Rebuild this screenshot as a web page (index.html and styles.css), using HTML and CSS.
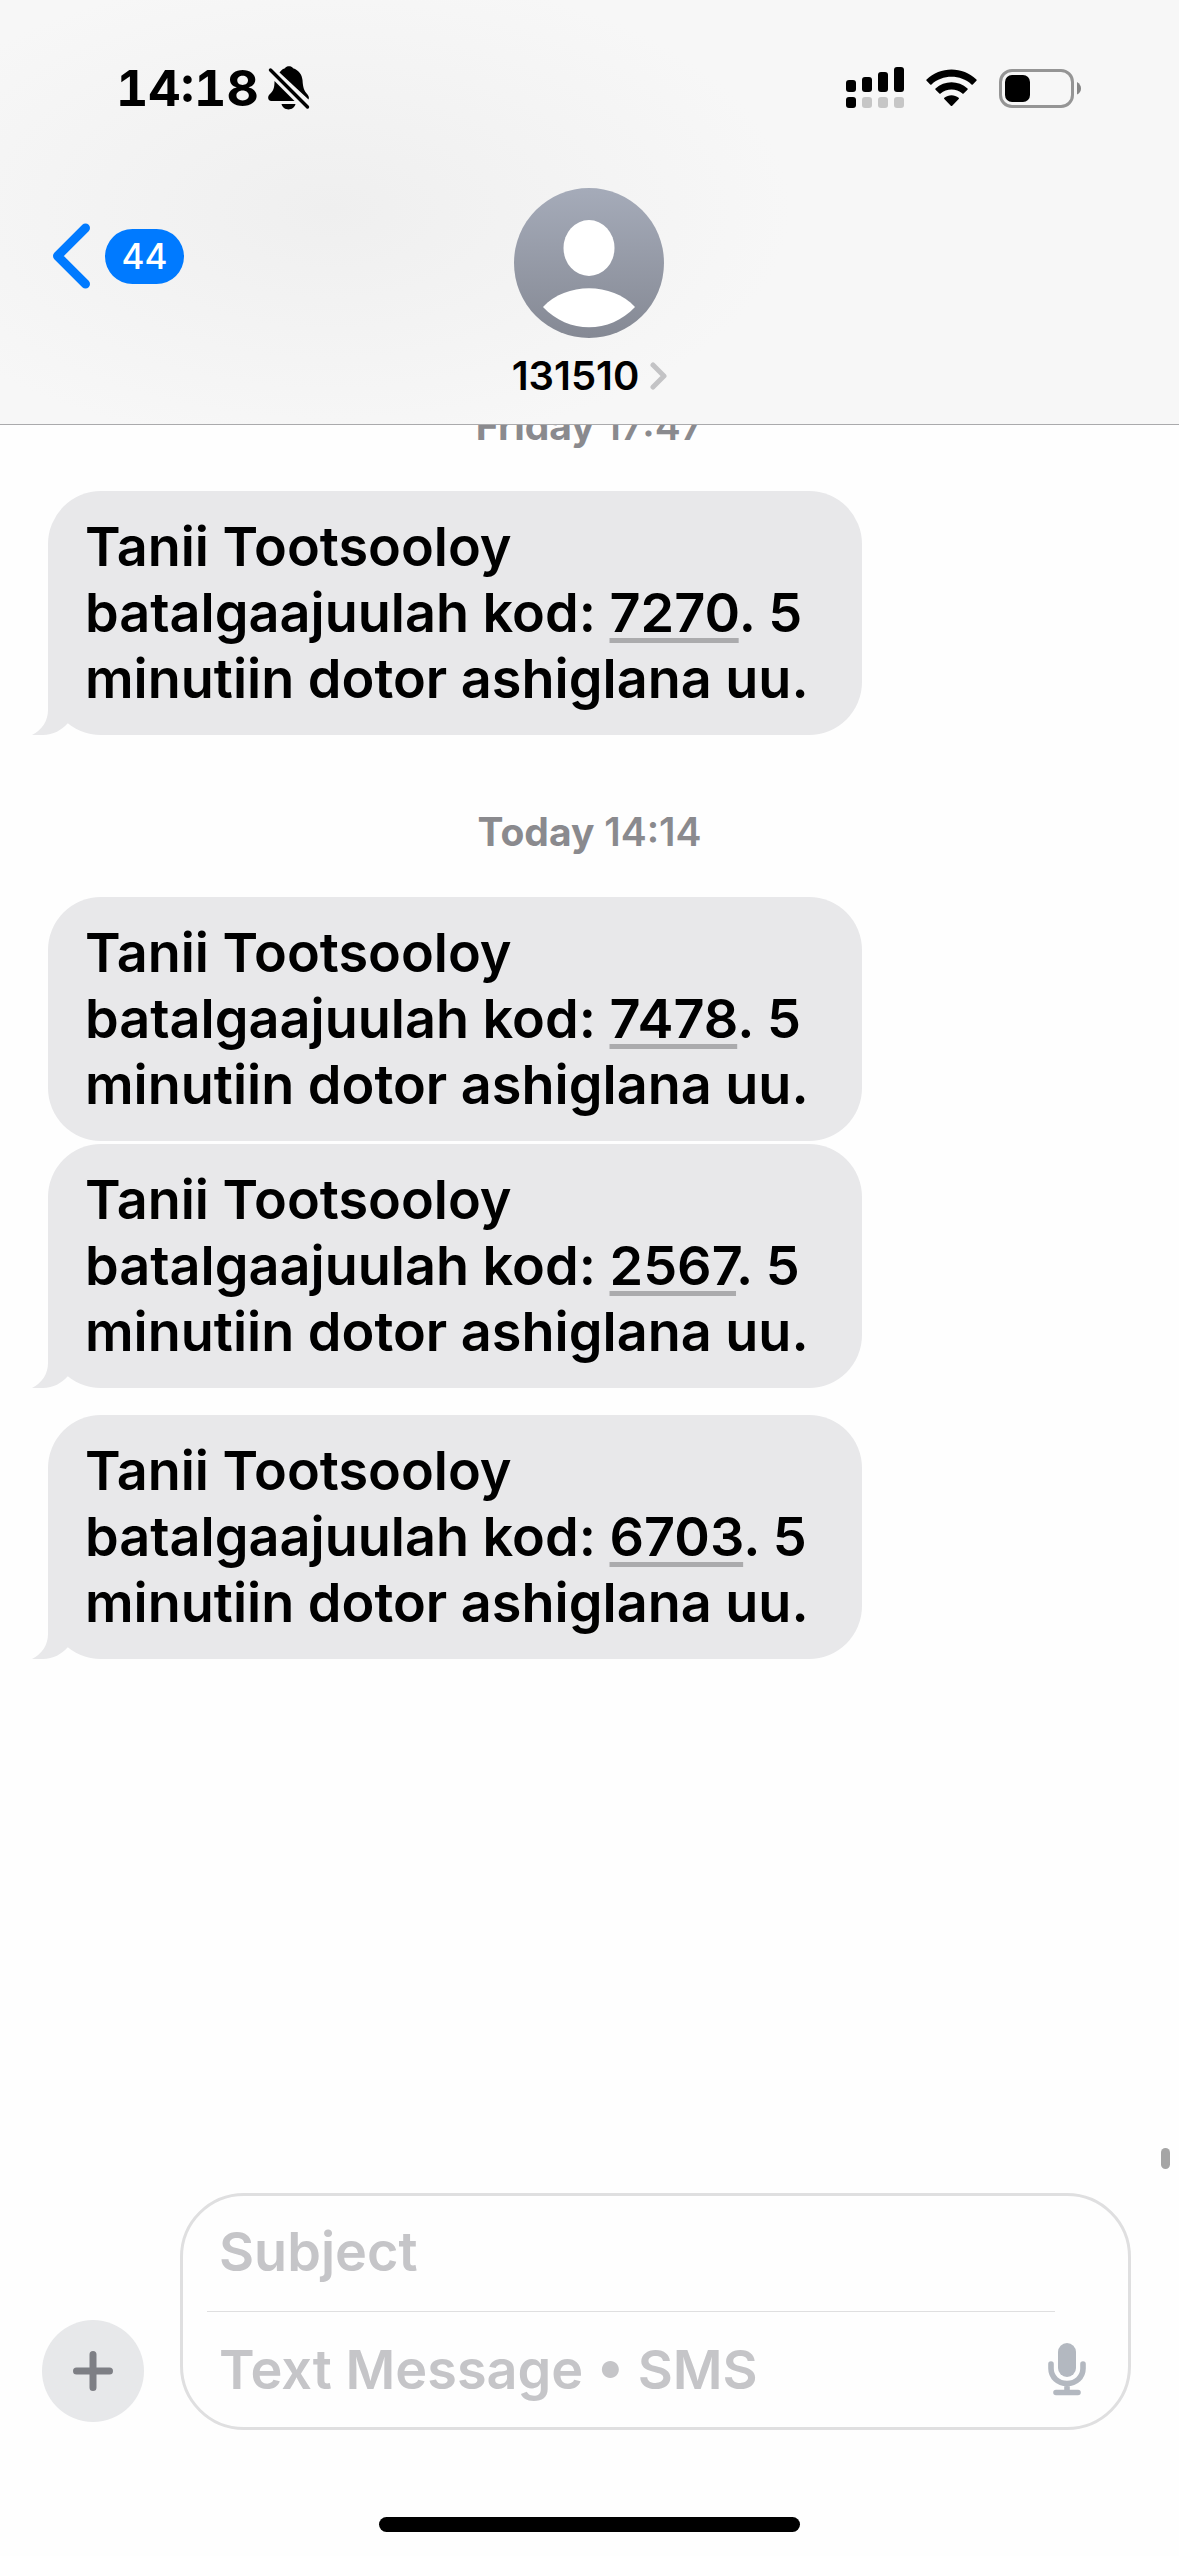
FILE: index.html
```
<!DOCTYPE html>
<html lang="en">
<head>
  <meta charset="UTF-8">
  <meta name="viewport" content="width=device-width, initial-scale=1.0">
  <title>131510</title>
  <link rel="stylesheet" href="styles.css">
</head>
<body>
  <header class="header">
    <div class="status-bar">
      <div class="status-left">
        <span class="time">14:18</span>
        <svg class="bell" width="42" height="44" viewBox="0 0 42 44">
          <path d="M11.5 6.5C13 4 15.5 2.6 17 2.2C18.5-.4 23.5-.4 25 2.2C31 4 34 9 34.5 14C35 22 36 24.500 39.500 28.500C41 30.500 41.200 32 40.500 33.500ZM6.500 15L26.500 35H3.500C-.5 35-.8 30.500 2 28C5.500 24.500 6.500 22 6.500 15ZM13.500 38H27.500C26 45.200 15 45.200 13.500 38Z"/>
          <path d="M4 2L42 40" fill="none" stroke="#f5f5f5" stroke-width="3"/>
          <path d="M2.500 4L39.500 41" fill="none" stroke="#000" stroke-width="3.400" stroke-linecap="round"/>
        </svg>
      </div>
      <div class="status-right">
        <svg width="58" height="42" viewBox="0 0 58 42">
          <rect x="0" y="13" width="10" height="12" rx="3"/>
          <rect x="16" y="10" width="10" height="15" rx="3"/>
          <rect x="32" y="5" width="10" height="20" rx="3"/>
          <rect x="48" y="0" width="10" height="25" rx="3"/>
          <rect x="0" y="30" width="10" height="11" rx="3"/>
          <g fill="#c6c6c6">
            <rect x="16" y="30" width="10" height="11" rx="3"/>
            <rect x="32" y="30" width="10" height="11" rx="3"/>
            <rect x="48" y="30" width="10" height="11" rx="3"/>
          </g>
        </svg>
        <svg width="51" height="38" viewBox="0 0 51 38">
          <path d="M.6 10.500C14-3 37-3 50.400 10.500Q51 11.200 50.400 11.800L46.800 15.400Q46.100 16 45.500 15.400C34.500 5.200 16.500 5.200 5.500 15.400Q4.900 16 4.200 15.400L.6 11.800Q0 11.200.6 10.500Z"/>
          <path d="M9.500 19.600C18.500 11.200 32.500 11.200 41.500 19.600Q42 20.200 41.500 20.800L37.600 24.600Q37 25.200 36.400 24.600C30.500 19.200 20.500 19.200 14.600 24.600Q14 25.200 13.400 24.600L9.500 20.800Q9 20.200 9.500 19.600Z"/>
          <path d="M18.300 28.800C22.500 25.400 28.500 25.400 32.700 28.800Q33.300 29.500 32.700 30.100L26.200 36.700Q25.500 37.300 24.800 36.700L18.300 30.100Q17.700 29.500 18.300 28.800Z"/>
        </svg>
        <svg width="82" height="39" viewBox="0 0 82 39">
          <rect x="1.500" y="1.500" width="72" height="36" rx="11.500" fill="none" stroke="#959595" stroke-width="3"/>
          <rect x="6" y="6" width="25" height="27" rx="7"/>
          <path d="M78 13Q82 15.500 82 19.500T78 25.500Z" fill="#868686"/>
        </svg>
      </div>
    </div>

    <nav class="nav">
      <button class="back" type="button" aria-label="Back">
        <svg width="40" height="68" viewBox="0 0 40 68">
          <path d="M34.500 6L6.500 34L34.500 62" fill="none" stroke="#007aff" stroke-width="9" stroke-linecap="round" stroke-linejoin="round"/>
        </svg>
        <span class="badge">44</span>
      </button>
      <button class="contact" type="button">
        <svg width="150" height="150" viewBox="0 0 150 150">
          <defs>
            <linearGradient id="avatar" x1="0" y1="0" x2="0" y2="1">
              <stop offset="0" stop-color="#a5abb9"/>
              <stop offset="1" stop-color="#858994"/>
            </linearGradient>
          </defs>
          <circle cx="75" cy="75" r="75" fill="url(#avatar)"/>
          <ellipse cx="75" cy="60" rx="25.500" ry="28" fill="#fff"/>
          <path d="M29 119C52 94 98 94 121 119C96 146 54 146 29 119Z" fill="#fff"/>
        </svg>
        <span class="contact-name">
          131510
          <svg width="17" height="28" viewBox="0 0 17 28">
            <path d="M3 3L14 14L3 25" fill="none" stroke="#c3c3c5" stroke-width="5" stroke-linecap="round" stroke-linejoin="round"/>
          </svg>
        </span>
      </button>
    </nav>
  </header>

  <main class="thread">
    <p class="date"><b>Friday</b> 17:47</p>
    <div class="bubble">
      Tanii Tootsooloy<br>batalgaajuulah kod: <a href="#">7270</a>. 5<br>minutiin dotor ashiglana uu.
      <svg class="tail" width="36" height="55" viewBox="0 0 36 55"><path d="M0 55C10 50 16 41 16 30V0L36 43C30 50 21 55 11 55Z"/></svg>
    </div>

    <p class="date"><b>Today</b> 14:14</p>
    <div class="bubble grouped">
      Tanii Tootsooloy<br>batalgaajuulah kod: <a href="#">7478</a>. 5<br>minutiin dotor ashiglana uu.
    </div>
    <div class="bubble">
      Tanii Tootsooloy<br>batalgaajuulah kod: <a href="#">2567</a>. 5<br>minutiin dotor ashiglana uu.
      <svg class="tail" width="36" height="55" viewBox="0 0 36 55"><path d="M0 55C10 50 16 41 16 30V0L36 43C30 50 21 55 11 55Z"/></svg>
    </div>
    <div class="bubble">
      Tanii Tootsooloy<br>batalgaajuulah kod: <a href="#">6703</a>. 5<br>minutiin dotor ashiglana uu.
      <svg class="tail" width="36" height="55" viewBox="0 0 36 55"><path d="M0 55C10 50 16 41 16 30V0L36 43C30 50 21 55 11 55Z"/></svg>
    </div>
    <div class="scroll-thumb"></div>
  </main>

  <form class="composer">
    <button class="add" type="button" aria-label="Add">
      <svg width="40" height="40" viewBox="0 0 40 40">
        <path d="M20 3.500V36.500M3.500 20H36.500" stroke="#7e7f85" stroke-width="7" stroke-linecap="round"/>
      </svg>
    </button>
    <div class="fields">
      <input class="subject" type="text" placeholder="Subject" aria-label="Subject">
      <div class="message-row">
        <input type="text" placeholder="Text Message • SMS" aria-label="Text Message">
        <button class="mic" type="button" aria-label="Dictate">
          <svg width="38" height="54" viewBox="0 0 38 54">
            <rect x="10" y="0" width="18" height="34" rx="9" fill="#b3b8c0"/>
            <path d="M3 21V25.500C3 34 10 40.500 19 40.500S35 34 35 25.500V21M19 41V49M8 49.500H30" fill="none" stroke="#b3b8c0" stroke-width="5.600" stroke-linecap="round"/>
          </svg>
        </button>
      </div>
    </div>
  </form>
  <div class="home-indicator"></div>
</body>
</html>
```

FILE: styles.css
```
* {
  box-sizing: border-box;
}

body {
  margin: 0;
  min-height: 100vh;
  display: flex;
  flex-direction: column;
  background-color: #fefefe;
  color: #000;
  font-family: Inter, "Liberation Sans", sans-serif;
  font-weight: 600;
}

button {
  padding: 0;
  border: none;
  background: none;
  color: inherit;
  font: inherit;
  cursor: pointer;
}

svg {
  display: block;
  flex: none;
}

/* Header */
.header {
  position: sticky;
  top: 0;
  z-index: 1;
  background: radial-gradient(ellipse 460px 240px at 330px 210px, #efefef, #f7f7f7);
  border-bottom: 1px solid #aaaaac;
}

.status-bar {
  height: 176px;
  padding: 0 98px 0 116px;
  display: flex;
  align-items: center;
  justify-content: space-between;
}

.status-left {
  display: flex;
  align-items: center;
  gap: 9px;
}

.status-right {
  display: flex;
  align-items: center;
  gap: 22px;
}

.time {
  font-size: 50px;
  font-weight: 700;
  font-variant-numeric: tabular-nums;
}

.nav {
  padding: 12px 51px 25px;
  display: grid;
  grid-template-columns: 1fr auto 1fr;
  align-items: start;
}

.back {
  margin-top: 34px;
  justify-self: start;
  display: flex;
  align-items: center;
  gap: 14px;
}

.badge {
  width: 79px;
  height: 55px;
  border-radius: 28px;
  background-color: #007aff;
  color: #fff;
  font-size: 35px;
  font-weight: 500;
  line-height: 55px;
  text-align: center;
}

.contact {
  display: flex;
  flex-direction: column;
  align-items: center;
  gap: 15px;
}

.contact-name {
  display: flex;
  align-items: center;
  gap: 11px;
  font-size: 40px;
  line-height: 46px;
}

/* Messages */
.thread {
  position: relative;
  flex: 1;
  margin-top: -22px;
  padding: 0 48px;
  display: flex;
  flex-direction: column;
  align-items: flex-start;
}

.date {
  align-self: center;
  margin: 0 0 42px;
  color: #8a8a8e;
  font-size: 39px;
  line-height: 46px;
}

.date b {
  font-weight: 700;
}

.bubble + .date {
  margin-top: 47px;
}

.bubble {
  position: relative;
  margin-bottom: 27px;
  padding: 23px 53px 23px 37px;
  border-radius: 53px;
  background-color: #e8e8ea;
  font-size: 54px;
  line-height: 66px;
  white-space: nowrap;
}

.grouped {
  margin-bottom: 3px;
}

.bubble a {
  color: inherit;
  text-decoration: underline #ababad 5px;
  text-underline-offset: 6px;
  text-decoration-skip-ink: none;
}

.tail {
  position: absolute;
  left: -16px;
  bottom: 0;
  fill: #e8e8ea;
}

.scroll-thumb {
  position: absolute;
  right: 9px;
  bottom: 24px;
  width: 9px;
  height: 21px;
  border-radius: 5px;
  background-color: #a5a5a5;
}

/* Composer */
.composer {
  padding: 0 48px 0 42px;
  display: flex;
  align-items: flex-end;
  gap: 36px;
}

.add {
  width: 102px;
  height: 102px;
  margin-bottom: 8px;
  border-radius: 50%;
  background-color: #e7e8ea;
  display: flex;
  align-items: center;
  justify-content: center;
}

.fields {
  flex: 1;
  min-width: 0;
  padding: 0 42px 0 24px;
  border: 3px solid #dfdfe0;
  border-radius: 64px;
}

.fields input {
  display: block;
  flex: 1;
  min-width: 0;
  height: 115px;
  padding: 0 12px;
  border: none;
  outline: none;
  background: none;
  color: #000;
  font: inherit;
  font-size: 54px;
}

.fields .subject {
  width: calc(100% - 31px);
  height: 116px;
  padding-bottom: 4px;
  border-bottom: 1px solid #dfdfe0;
}

.fields input::placeholder {
  color: #c5c5c8;
  opacity: 1;
}

.message-row {
  display: flex;
  align-items: center;
}

.home-indicator {
  width: 421px;
  height: 15px;
  margin: 87px auto 24px;
  border-radius: 8px;
  background-color: #000;
}
```
